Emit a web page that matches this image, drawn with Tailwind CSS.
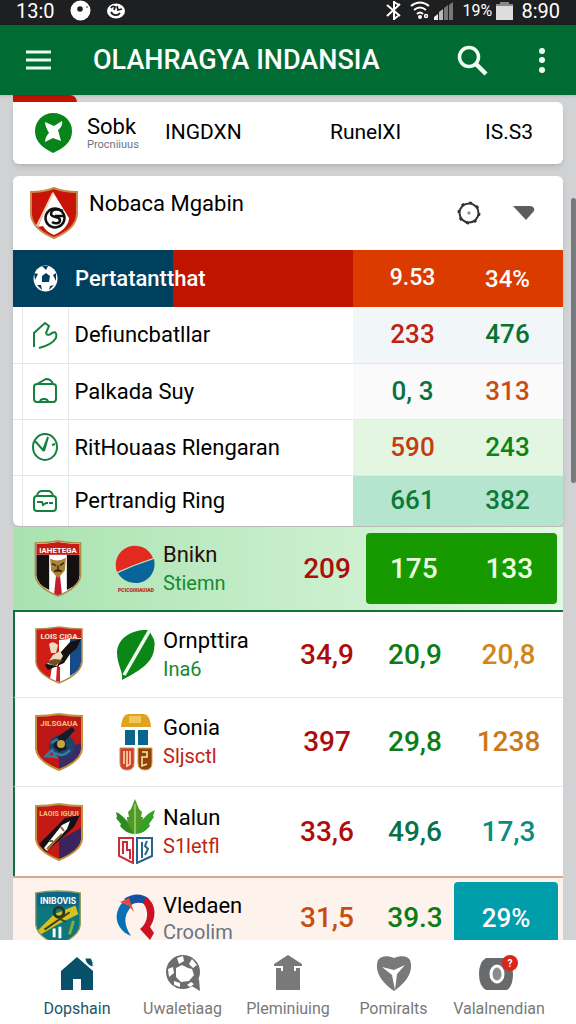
<!DOCTYPE html>
<html lang="id">

<head>
    <meta charset="UTF-8">
    <meta name="viewport" content="width=device-width, initial-scale=1.0">
    <title>Olahragya Indansia</title>
    <script src="https://cdn.jsdelivr.net/npm/@tailwindcss/browser@4"></script>
</head>

<body class="flex h-screen flex-col overflow-hidden bg-[#d0d2d3] font-[Roboto,sans-serif] text-black">
    <!-- Status bar -->
    <div class="flex h-[25px] shrink-0 items-center bg-[#1e1f21] pr-4 pb-1 pl-4 text-xl leading-5 text-white">
        <span class="w-[54px]">13:0</span>
        <svg class="mr-4 size-[21px]" viewBox="0 0 21 21"><circle cx="10.500" cy="10.500" r="10" fill="#fff"/><circle cx="10" cy="9" r="2.800" fill="#1e1f21"/><circle cx="17" cy="7" r=".8" fill="#1e1f21"/></svg>
        <svg class="h-4 w-[18px]" viewBox="0 0 18 16"><ellipse cx="9" cy="8" rx="9" ry="7.500" fill="#fff"/><path d="M4 5c1-2 3-2 4-1L7 7M10 3l1 4 4-1M4 9c2 4 7 4 9 1" fill="none" stroke="#1e1f21" stroke-width="1.800"/></svg>
        <div class="ml-auto flex items-center">
            <svg class="mr-2 h-[21px] w-4" viewBox="0 0 16 21" fill="none" stroke="#fff" stroke-width="2"><path d="M1 5l13 11M1 16L14 4M8 1v19M8 2l5 3M8 19l4-3"/></svg>
            <svg class="mr-1 h-[19px] w-5" viewBox="0 0 20 19" fill="none" stroke="#fff" stroke-width="2"><path d="M1 5q9-7 18 0M4 9q6-5 12 0M7 13q3-3 6 0"/><circle cx="10" cy="16" r="1"/><circle cx="16" cy="15" r="1.500" stroke-width="1.500"/></svg>
            <svg class="mr-2 h-[18px] w-5" viewBox="0 0 20 18"><path d="M0 18v-3l4-3v6z" fill="#eee"/><path d="M5 18v-8l4-3v11z" fill="#bbb"/><path d="M10 18V6l4-3v15zM15 18V3l4-3v18z" fill="#777"/></svg>
            <span class="w-[34px] text-base leading-5">19%</span>
            <svg class="mr-2 h-[18px] w-[17px]" viewBox="0 0 17 18"><path d="M0 2h4V0h9v2h4v16H0z" fill="#ddd"/><path d="M0 2h4V0h9v2h4v2H0z" fill="#888"/></svg>
            <span>8:90</span>
        </div>
    </div>

    <!-- App bar -->
    <header class="z-10 flex h-[70px] shrink-0 items-center bg-[#006c33] pr-7 pl-[26px] text-white shadow">
        <button type="button" aria-label="Menu">
            <svg class="h-5 w-[25px]" viewBox="0 0 25 20" stroke="#e6fff0" stroke-width="3"><path d="M0 2h25M0 10h25M0 18h25"/></svg>
        </button>
        <h1 class="ml-[42px] flex-1 text-[27px] font-medium whitespace-nowrap">OLAHRAGYA INDANSIA</h1>
        <button type="button" aria-label="Cari" class="mr-12">
            <svg class="size-[31px]" viewBox="0 0 31 31" fill="none" stroke="#f0fff4"><circle cx="12" cy="12" r="9.500" stroke-width="3.500"/><path d="M19 19l10 10" stroke-width="4.500"/></svg>
        </button>
        <button type="button" aria-label="Lainnya">
            <svg class="h-[26px] w-3" viewBox="0 0 12 26" fill="#f0fff4"><circle cx="6" cy="4" r="3"/><circle cx="6" cy="13" r="3"/><circle cx="6" cy="23" r="3"/></svg>
        </button>
    </header>

    <main class="relative min-h-0 flex-1 overflow-hidden px-[13px]">
        <div class="h-[7px] w-16 rounded-tr-lg bg-[#c41200]"></div>

        <section class="mb-3 flex h-[62px] items-center rounded-b-md rounded-tr-md bg-white pr-[30px] pl-[22px] text-[21px] shadow-md">
            <svg class="h-10 w-[37px] shrink-0" viewBox="0 0 37 40"><path d="M18 0C29 0 37 8 37 18c0 11-8 17-19 22C8 35 0 29 0 18 0 8 8 0 18 0z" fill="#078518"/><path d="M10 9l9 4 8-5c1 3-1 7-4 9l3 11-8-3-8 4c0-4 2-7 4-9-2-4-4-7-4-11z" fill="#fff"/></svg>
            <div class="ml-[15px] w-[78px]">
                <p class="text-[22px] leading-6">Sobk</p>
                <p class="text-[11px] leading-3 text-gray-500">Procniiuus</p>
            </div>
            <span class="w-[165px]">INGDXN</span>
            <span>RunelXI</span>
            <span class="ml-auto">IS.S3</span>
        </section>

        <section class="overflow-hidden rounded-md bg-white shadow-md">
            <div class="flex h-[74px] items-center pr-7 pl-[17px]">
                <svg class="h-[52px] w-12 shrink-0" viewBox="0 0 48 52"><path d="M1 5Q14 5 24 1Q34 5 47 5V27Q46 42 24 51Q2 42 1 27Z" fill="#c81408" stroke="#c98a4b" stroke-width="2"/><path d="M23 5l16 26c0 8-8 14-15 17-5-2-9-5-11-9l-5 1z" fill="#fff"/><path d="M23 6L7 39" stroke="#f3d3b0" stroke-width="2"/><circle cx="25" cy="31" r="9.500" fill="none" stroke="#111" stroke-width="2.500"/><path d="M33 24c-8-3-12-1-12 3s9 2 9 6-5 4-8 2M25 29h9" fill="none" stroke="#111" stroke-width="2.500"/></svg>
                <h2 class="mb-5 ml-[11px] flex-1 text-[22px]">Nobaca Mgabin</h2>
                <button type="button" aria-label="Pengaturan" class="mr-8">
                    <svg class="size-6" viewBox="0 0 24 24" fill="none" stroke="#333"><circle cx="12" cy="12" r="9.500" stroke-width="2"/><circle cx="12" cy="12" r="10.500" stroke-width="2" stroke-dasharray="3 5.200"/><circle cx="12" cy="12" r="1.200" fill="#777" stroke="#999"/></svg>
                </button>
                <button type="button" aria-label="Buka">
                    <svg class="h-[14px] w-[22px]" viewBox="0 0 22 14"><path d="M0 0h16c4 0 6 2 5 5l-8 9z" fill="#5c5e5c"/></svg>
                </button>
            </div>

            <table class="w-full table-fixed text-[22px]">
                <colgroup>
                    <col class="w-[9px]">
                    <col class="w-[46px]">
                    <col>
                    <col class="w-[107px]">
                    <col class="w-[103px]">
                </colgroup>
                <tbody>
                    <tr class="h-[57px] text-white">
                        <td colspan="3" class="bg-linear-to-r from-[#00405f] from-47% to-[#c01400] to-47% pl-5">
                            <div class="flex items-center gap-[17px]">
                                <svg class="h-[27px] w-[25px]" viewBox="0 0 25 27"><ellipse cx="12.500" cy="13.500" rx="12" ry="13" fill="#fff"/><path d="M9 11l4-3 4 3-1 6H9zM9 1l6 0-2 4zM1 8l4 1-3 6zM23 8l-3 2 3 6zM4 20l4 0 1 5zM21 20l-4 1-1 4z" fill="#00405f"/></svg>
                                <span class="font-medium">Pertatantthat</span>
                            </div>
                        </td>
                        <td class="bg-[#dc3b00] pl-3 text-center text-[23px] font-medium">9.53</td>
                        <td class="bg-[#dc3b00] pr-2 text-center text-2xl font-medium">34%</td>
                    </tr>
                    <tr class="h-14 border-b border-gray-200">
                        <td class="border-r border-gray-200"></td>
                        <td class="border-r border-gray-200">
                            <svg class="mx-auto h-7 w-[26px]" viewBox="0 0 26 28" fill="none" stroke="#16803f" stroke-width="2"><path d="M2 26V12L13 2l4 3-3 7c1 3 4 2 6 0 4-2 5 1 4 5-3 5-9 8-17 10"/></svg>
                        </td>
                        <td class="pl-[6px]">Defiuncbatllar</td>
                        <td class="bg-[#f1f6f9] pl-3 text-center text-[26px] font-medium text-[#bd2410]">233</td>
                        <td class="bg-[#f1f6f9] pr-2 text-center text-[26px] font-medium text-[#087230]">476</td>
                    </tr>
                    <tr class="h-14 border-b border-gray-200">
                        <td class="border-r border-gray-200"></td>
                        <td class="border-r border-gray-200">
                            <svg class="mx-auto h-[26px] w-6" viewBox="0 0 24 26" fill="none" stroke="#16803f" stroke-width="2"><path d="M4 6h16q3 0 3 3v12q0 3-3 3H4q-3 0-3-3V9q0-3 3-3zM4 6l9-5c4 0 6 2 7 5M7 24q0-3 4-3t4 3"/></svg>
                        </td>
                        <td class="pl-[6px]">Palkada Suy</td>
                        <td class="bg-[#fafafa] pl-3 text-center text-[26px] font-medium text-[#087240]">0, 3</td>
                        <td class="bg-[#fafafa] pr-2 text-center text-[26px] font-medium text-[#c94c18]">313</td>
                    </tr>
                    <tr class="h-14 border-b border-gray-200">
                        <td class="border-r border-gray-200"></td>
                        <td class="border-r border-gray-200">
                            <svg class="mx-auto h-7 w-[26px]" viewBox="0 0 26 28" fill="none" stroke="#16803f" stroke-width="2"><ellipse cx="13" cy="14" rx="12" ry="13"/><path d="M3 8l8 9 5-13M16 4l-4 14M20 12l3-1"/></svg>
                        </td>
                        <td class="pl-[6px]">RitHouaas Rlengaran</td>
                        <td class="bg-[#e3f6e1] pl-3 text-center text-[26px] font-medium text-[#c43c14]">590</td>
                        <td class="bg-[#e3f6e1] pr-2 text-center text-[26px] font-medium text-[#0c8416]">243</td>
                    </tr>
                    <tr class="h-[51px]">
                        <td class="border-r border-gray-200"></td>
                        <td class="border-r border-gray-200">
                            <svg class="mx-auto h-6 w-[26px]" viewBox="0 0 26 24" fill="none" stroke="#16803f" stroke-width="2"><rect x="2" y="7" width="22" height="15" rx="3"/><path d="M5 7q1-5 5-5h6q4 0 5 5M5 13h5l1 3 3-2h2M17 14h4"/></svg>
                        </td>
                        <td class="pl-[6px]">Pertrandig Ring</td>
                        <td class="bg-[#b5e4cf] pl-3 text-center text-[26px] font-medium text-[#0a7a38]">661</td>
                        <td class="bg-[#b5e4cf] pr-2 text-center text-[26px] font-medium text-[#0a7a38]">382</td>
                    </tr>
                </tbody>
            </table>
        </section>

        <!-- Team standings -->
        <table class="mt-px w-full table-fixed border-separate border-spacing-0 text-[28px] font-medium">
            <colgroup>
                <col class="w-[90px]">
                <col class="w-[60px]">
                <col>
                <col class="w-[74px]">
                <col class="w-[90px]">
                <col class="w-[109px]">
            </colgroup>
            <tbody class="bg-linear-to-r from-[#a9e2b0] to-[#e2f9e3]">
                <tr class="h-[83px]">
                    <td>
                        <svg class="mx-auto h-[57px] w-12" viewBox="0 0 48 58"><path d="M1 3Q12 3 24 1Q36 3 47 3V36Q46 48 24 57Q2 48 1 36Z" fill="#fff"/><path d="M2 15h13v36Q3 45 2 36zM33 15h13v21q0 9-13 15z" fill="#151010"/><path d="M2 4Q12 4 24 2Q36 4 46 4V15H2z" fill="#c51d16"/><path d="M22 36h4l2 19-4 2-4-2z" fill="#c51d30"/><path d="M16 19q8 4 16-1l-1 13-7 8-7-8z" fill="#a88439"/><path d="M18 24l4 2M30 23l-4 3M20 32q4-3 8 0M24 26v4" stroke="#3d260f" stroke-width="1.500"/><path d="M1 3Q12 3 24 1Q36 3 47 3V36Q46 48 24 57Q2 48 1 36Z" fill="none" stroke="#ad8a48" stroke-width="1.500"/><text x="24" y="13" text-anchor="middle" font-size="8" font-weight="700" fill="#fff">IAHETEGA</text></svg>
                    </td>
                    <td>
                        <svg class="ml-3 h-12 w-[42px]" viewBox="0 0 42 48"><path d="M2 27A18.500 18.500 0 1 1 38 13Q20 19 2 27z" fill="#e22a20"/><path d="M3 28Q20 20 39 14c3 14-7 24-18 24-8 0-15-4-18-10z" fill="#08659b"/><text x="21" y="47" text-anchor="middle" font-size="5" font-weight="900" fill="#b82020">PCICOIIIIAUIAD</text></svg>
                    </td>
                    <td class="text-xl leading-7 font-normal">
                        <p class="text-[22px] text-[#2b0c0c]">Bnikn</p>
                        <p class="text-[#168a34]">Stiemn</p>
                    </td>
                    <td class="text-center text-[#ad0d0a]">209</td>
                    <td colspan="2" class="pr-[6px] pl-[2px]">
                        <div class="grid h-[71px] grid-cols-2 items-center rounded bg-[#169a00] text-center text-[#eaffdf]">
                            <span>175</span>
                            <span>133</span>
                        </div>
                    </td>
                </tr>
            </tbody>
            <tbody class="bg-white">
                <tr class="h-[88px] [&>td]:border-t-2 [&>td]:border-t-[#14703a] [&>td]:border-b [&>td]:border-b-gray-200">
                    <td class="border-l-2 border-l-[#14703a]">
                        <svg class="mx-auto h-[58px] w-12" viewBox="0 0 48 58"><path d="M1 3Q12 3 24 1Q36 3 47 3V36Q46 48 24 57Q2 48 1 36Z" fill="#d01d18"/><path d="M24 14l22-2v24Q46 47 24 57z" fill="#fff"/><path d="M35 13h11v23q0 8-11 14z" fill="#174a88"/><path d="M17 41l8 0 3 14-4 2-9-4z" fill="#fff"/><path d="M22 41l3 0v15l-4-1z" fill="#c8202c"/><path d="M46 13L35 16 25 27l-15 12 3 5 16-7 6-9 7-6z" fill="#17120f"/><path d="M14 18q4-4 9 1l-2 8-5 0zM18 29l7-4 3 5-6 10-10-2z" fill="#eadcc0"/><path d="M11 36l8-3 9 1-8 6z" fill="#6f4e26"/><path d="M1 3Q12 3 24 1Q36 3 47 3V36Q46 48 24 57Q2 48 1 36Z" fill="none" stroke="#ad8a48" stroke-width="1.500"/><text x="24" y="13" text-anchor="middle" font-size="8" font-weight="700" fill="#f8e6d0">LOIS CIGA</text></svg>
                    </td>
                    <td>
                        <svg class="ml-3 h-[52px] w-[42px]" viewBox="0 0 42 52"><path d="M7 51C8 41 2 36 2 23 3 8 18 0 34 1L37 7c3 4 3 8 2 14C37 35 22 43 7 51z" fill="#0b8717"/><path d="M36-1L9 46" stroke="#effff0" stroke-width="3.500"/></svg>
                    </td>
                    <td class="text-xl leading-7 font-normal">
                        <p class="text-[22px]">Ornpttira</p>
                        <p class="text-[#168a34]">Ina6</p>
                    </td>
                    <td class="text-center text-[#ad0d0a]">34,9</td>
                    <td class="pl-3 text-center text-[#0a7d16]">20,9</td>
                    <td class="text-center text-[#d08618]">20,8</td>
                </tr>
                <tr class="h-[89px] [&>td]:border-b [&>td]:border-b-gray-200">
                    <td class="border-l-2 border-l-[#14703a]">
                        <svg class="mx-auto h-[58px] w-12" viewBox="0 0 48 58"><path d="M1 3Q12 3 24 1Q36 3 47 3V36Q46 48 24 57Q2 48 1 36Z" fill="#bd1716"/><path d="M24 38l22-8v6q0 12-22 21z" fill="#3b2a68"/><ellipse cx="27" cy="33" rx="13" ry="11" fill="#1c4569"/><path d="M37 14l3 3-10 11 2 8-8 3-6-6 4-9z" fill="#141b2a"/><circle cx="26" cy="31" r="4" fill="#c7a636"/><path d="M11 43l6-6 4 7zM16 30l7-4M20 40q8 5 15-3" fill="none" stroke="#3d79a0" stroke-width="2.500"/><path d="M1 3Q12 3 24 1Q36 3 47 3V36Q46 48 24 57Q2 48 1 36Z" fill="none" stroke="#c1933c" stroke-width="2"/><text x="24" y="13" text-anchor="middle" font-size="8" font-weight="700" fill="#efc476">JILSGAUA</text></svg>
                    </td>
                    <td>
                        <svg class="ml-4 h-[58px] w-[34px]" viewBox="0 0 34 58"><path d="M2 14Q3 1 10 1h14q7 0 8 13z" fill="#e1a31d"/><path d="M10 3h12v7H10z" fill="#f2c75a"/><path d="M6 17h10v15H6zM19 17h10v15H19z" fill="#08658e"/><path d="M1 35h14v15q0 7-7 7t-7-7z" fill="#d04034" stroke="#bc8c4e"/><path d="M19 35h14v15q0 7-7 7t-7-7z" fill="#91420c" stroke="#d4a33a"/><path d="M5 38v13M8 38v15l3-2V38M23 39h5v5h-5v9l5-2" fill="none" stroke="#ffe8a8" stroke-width="1.500"/></svg>
                    </td>
                    <td class="text-xl leading-7 font-normal">
                        <p class="text-[22px]">Gonia</p>
                        <p class="text-[#bd2410]">Sljsctl</p>
                    </td>
                    <td class="text-center text-[#ad0d0a]">397</td>
                    <td class="pl-3 text-center text-[#0a7d16]">29,8</td>
                    <td class="text-center text-[#c97a18]">1238</td>
                </tr>
                <tr class="h-[89px]">
                    <td class="border-l-2 border-l-[#14703a]">
                        <svg class="mx-auto h-[58px] w-12" viewBox="0 0 48 58"><path d="M1 3Q12 3 24 1Q36 3 47 3V36Q46 48 24 57Q2 48 1 36Z" fill="#c31a16"/><path d="M24 37l22-12v11q0 12-22 21z" fill="#3b245e"/><path d="M4 41L30 15l15-3-6 12-28 25z" fill="#151014"/><path d="M9 45l18-23 8-4-3 8-20 22z" fill="#fff"/><path d="M12 46l15-15M18 38l-4 0M26 24l3 4" stroke="#806630" stroke-width="2"/><path d="M1 3Q12 3 24 1Q36 3 47 3V36Q46 48 24 57Q2 48 1 36Z" fill="none" stroke="#c1933c" stroke-width="2"/><text x="24" y="13" text-anchor="middle" font-size="7" font-weight="700" fill="#efc476">LAOIS IGUUI</text></svg>
                    </td>
                    <td>
                        <svg class="ml-3 h-[65px] w-[42px]" viewBox="0 0 42 65"><path d="M20 35C15 24 8 16 1 13l1 5-1 1 5 6-1 2c4 5 9 8 15 8z" fill="#2c8c22"/><path d="M20 35C24 23 32 14 40 11l-2 6 1 1-5 7 1 2c-4 5-9 8-15 8z" fill="#35a028"/><path d="M20 35C15 30 12 24 12 18l2 0-1-5 3-3L20 0l4 10 3 3-1 5 2 0c0 6-3 12-8 17z" fill="#4d9b27"/><path d="M20 5v32" stroke="#d4e9a0"/><path d="M4 39h14v25L4 57z" fill="#fff" stroke="#cc2c3a" stroke-width="2"/><path d="M22 39h15v18l-15 7z" fill="#fff" stroke="#23658e" stroke-width="2"/><path d="M8 55V43h4v8h3v9" fill="none" stroke="#cc2c3a" stroke-width="2"/><path d="M27 43v16M32 42l-2 5 3 3-3 6" fill="none" stroke="#23658e" stroke-width="2"/></svg>
                    </td>
                    <td class="text-xl leading-7 font-normal">
                        <p class="text-[22px]">Nalun</p>
                        <p class="text-[#bd2410]">S1letfl</p>
                    </td>
                    <td class="text-center text-[#ad0d0a]">33,6</td>
                    <td class="pl-3 text-center text-[#08704a]">49,6</td>
                    <td class="text-center text-[#0c8c80]">17,3</td>
                </tr>
            </tbody>
            <tbody class="bg-[#fef2ec]">
                <tr class="h-[82px] [&>td]:border-t-2 [&>td]:border-t-[#d9a893]">
                    <td>
                        <svg class="mx-auto h-[56px] w-12" viewBox="0 0 48 58"><path d="M1 3Q12 1 24 1Q36 1 47 3V36Q46 48 24 57Q2 48 1 36Z" fill="#0c6687"/><path d="M2 17h44v19q-1 10-22 20Q3 46 2 36z" fill="#0d777c"/><path d="M3 42L20 25l22-9 3 9-20 10-19 11z" fill="#d7bf24"/><circle cx="25" cy="23" r="5" fill="none" stroke="#2a3517" stroke-width="3"/><path d="M10 41l26-18M24 29l8 4" stroke="#3b4315" stroke-width="2"/><path d="M20 40v9M26 38v12" stroke="#fff" stroke-width="3"/><path d="M36 46l4-14" stroke="#85ae38" stroke-width="3"/><path d="M1 3Q12 1 24 1Q36 1 47 3V36Q46 48 24 57Q2 48 1 36Z" fill="none" stroke="#8d9d55" stroke-width="1.500"/><text x="24" y="14" text-anchor="middle" font-size="9" font-weight="700" fill="#fff">INIBOVIS</text></svg>
                    </td>
                    <td>
                        <svg class="ml-3 h-12 w-[42px]" viewBox="0 0 42 48"><path d="M16 42C6 38 0 29 2 19 4 12 7 8 12 5l4 8c-8 9-7 18 0 29z" fill="#0870b5"/><path d="M9 5C17-1 28-1 34 5l-4 5q-8-3-14 1z" fill="#1551a0"/><path d="M31 3c10 6 11 20 4 30l4 6-4 7-10-11c9-7 9-19 3-26z" fill="#cc1420"/><path d="M5 8l9-4 5 14-5-6z" fill="#e34b42"/></svg>
                    </td>
                    <td class="text-xl leading-7 font-normal">
                        <p class="text-[22px]">Vledaen</p>
                        <p class="leading-6 text-gray-500">Croolim</p>
                    </td>
                    <td class="text-center text-[#c94c10]">31,5</td>
                    <td class="pl-3 text-center text-[#0a7d16]">39.3</td>
                    <td class="pr-[5px]">
                        <div class="flex h-[72px] items-center justify-center rounded bg-[#009dab] text-[26px] text-white">29%</div>
                    </td>
                </tr>
            </tbody>
        </table>

        <!-- Scrollbar thumb -->
        <div class="absolute top-[103px] right-0 h-[285px] w-[5px] rounded bg-[#77797c]"></div>
    </main>

    <nav class="z-10 flex h-[84px] shrink-0 justify-between bg-white px-7 pt-[15px] text-base leading-6 text-[#77797a]">
        <a href="#" class="flex w-[98px] flex-col items-center gap-[6px] text-[#21556b]">
            <svg class="h-9 w-[34px] shrink-0" viewBox="0 0 34 36"><path d="M1 16L17 2l16 14v19H21V24h-8v11H1z" fill="#07506a"/><path d="M25 3l6 0q3 4 2 9c-4-1-8-4-8-9z" fill="#07506a" stroke="#fff"/></svg>
            Dopshain
        </a>
        <a href="#" class="flex w-[98px] flex-col items-center gap-[6px]">
            <svg class="h-9 w-[34px] shrink-0" viewBox="0 0 34 36"><circle cx="17" cy="17" r="17" fill="#6b6d6e"/><path d="M24 30l9-6 1 12z" fill="#6b6d6e"/><path d="M10 13l6-3 6 3 4 1 2 6-5 6-8 1-5-5z" fill="#fff"/><path d="M11 3l6-2 1 5-5 3zM26 4l5 6-4 3-4-4zM2 14l5-2 1 6-5 4zM8 26l6 2v4l-6-2zM21 30l4-3 3 2-4 3z" fill="#fff"/></svg>
            Uwaletiaag
        </a>
        <a href="#" class="flex w-[98px] flex-col items-center gap-[6px]">
            <svg class="h-9 w-[30px] shrink-0" viewBox="0 0 30 36"><path d="M15 0l14 9v4H1V9z" fill="#77797a"/><path d="M3 12h24v23H3z" fill="#77797a"/><path d="M1 12h8v4M29 12h-7v4" fill="none" stroke="#fff" stroke-width="2"/></svg>
            Pleminiuing
        </a>
        <a href="#" class="flex w-[98px] flex-col items-center gap-[6px]">
            <svg class="h-9 w-9 shrink-0" viewBox="0 0 36 36"><path d="M18 3C25 0 32 1 34 5c4 11-3 22-16 31C5 27-2 16 2 5 5 1 11 0 18 3z" fill="#77797a"/><path d="M6 12l12 3 11-5-8 9-2 16-3-15z" fill="#fff"/></svg>
            Pomiralts
        </a>
        <a href="#" class="flex w-[98px] flex-col items-center gap-[6px]">
            <svg class="h-9 w-[50px] shrink-0" viewBox="0 0 50 36"><path d="M12 3h20q7 4 7 16t-6 16H12Q5 31 5 19T12 3z" fill="#686a6c"/><ellipse cx="23" cy="19" rx="6" ry="8" fill="#8a8c8e" stroke="#fff" stroke-width="3"/><circle cx="36" cy="8" r="8" fill="#d92618"/><text x="36" y="12" text-anchor="middle" font-size="10" font-weight="700" fill="#fff">?</text></svg>
            Valalnendian
        </a>
    </nav>
</body>

</html>
